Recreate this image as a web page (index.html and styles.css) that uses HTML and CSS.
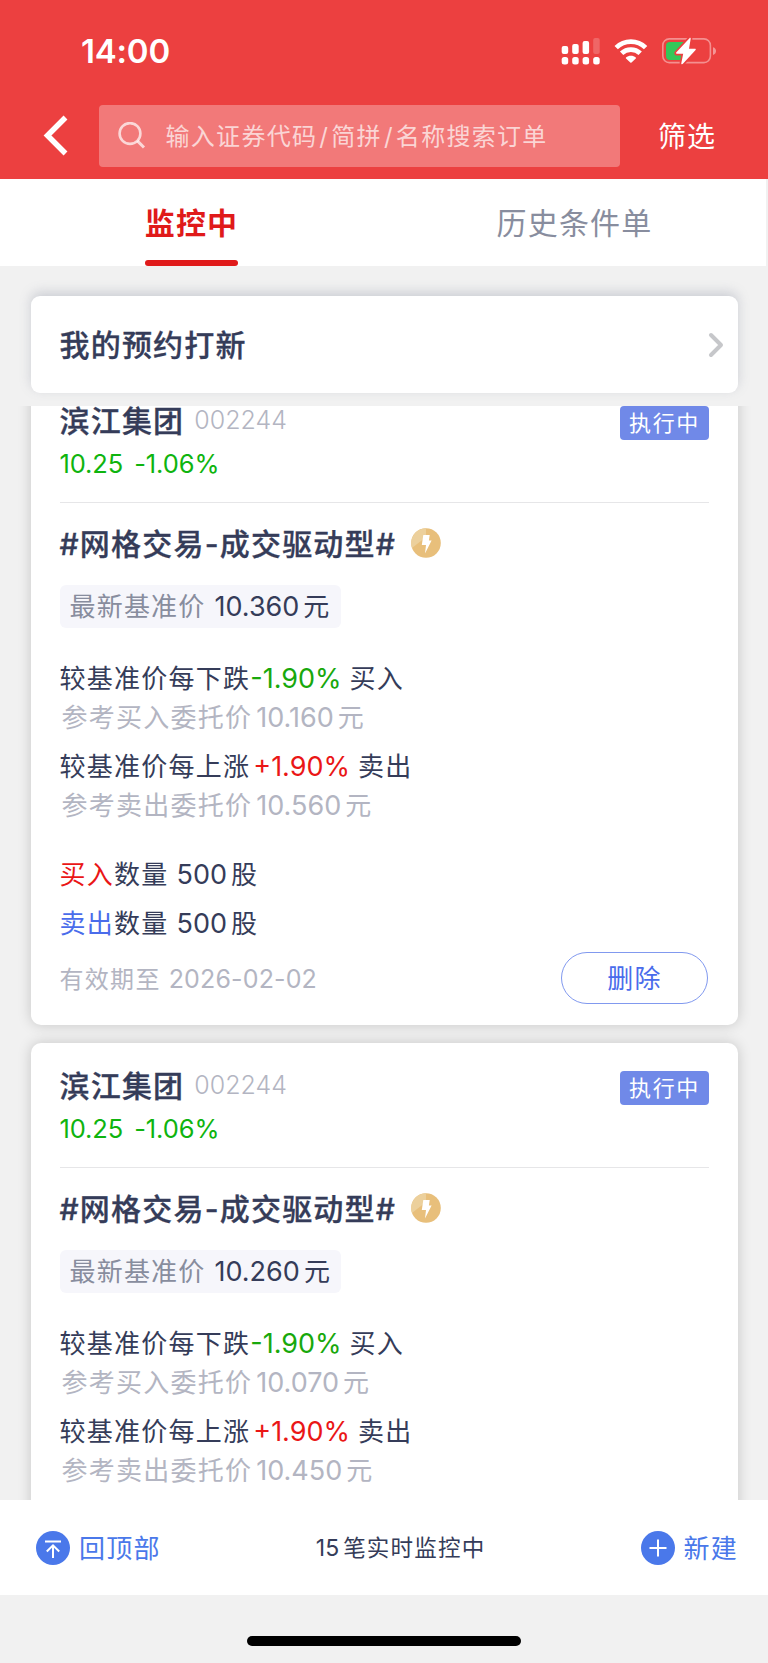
FILE: index.html
```
<!DOCTYPE html>
<html lang="zh-CN">
<head>
    <meta charset="UTF-8">
    <meta name="viewport" content="width=device-width, initial-scale=1.0">
    <title>条件单</title>
    <link rel="stylesheet" href="styles.css">
</head>
<body>
    <div class="page">
        <!-- 顶部 -->
        <header class="header">
            <div class="status-bar">
                <span class="time">14:00</span>
                <svg class="status-icons" width="158" height="32" viewBox="0 0 158 32">
                    <g fill="#fff">
                        <rect x="1.7" y="11" width="6.5" height="8" rx="2"/>
                        <rect x="12.2" y="9" width="6.5" height="10" rx="2"/>
                        <rect x="22.6" y="6" width="6.5" height="13" rx="2"/>
                        <rect x="33.2" y="3" width="6.5" height="16" rx="2" opacity=".2"/>
                        <rect x="1.7" y="22" width="6.5" height="7.5" rx="2.5"/>
                        <rect x="12.2" y="22" width="6.5" height="7.5" rx="2.5"/>
                        <rect x="22.6" y="22" width="6.5" height="7.5" rx="2.5"/>
                        <rect x="33.2" y="22" width="6.5" height="7.5" rx="2.5"/>
                        <path d="M66 22.6c1.400-1.300 3-1.900 4.900-1.900s3.500.600 4.900 1.900c.300.300.300.600 0 .900l-4.300 4c-.400.400-.800.400-1.200 0l-4.300-4c-.300-.300-.300-.600 0-.9z"/>
                    </g>
                    <g fill="none" stroke="#fff" stroke-width="4.800">
                        <path d="M56.200 12.600a21 21 0 0 1 29.400 0"/>
                        <path d="M61.600 18.300a13.500 13.500 0 0 1 18.600 0"/>
                    </g>
                    <rect x="102.800" y="3.900" width="47.600" height="23.700" rx="6.500" fill="none" stroke="#fff" stroke-opacity=".42" stroke-width="1.600"/>
                    <path d="M153 12.200c2 .500 3 2 3 3.900s-1 3.400-3 3.900z" fill="#fff" fill-opacity=".45"/>
                    <path d="M110 7h15.500v18H110a4 4 0 0 1-4-4V11a4 4 0 0 1 4-4z" fill="#34c759"/>
                    <path d="M129.500 3.200L116.200 17.600c-.500.600-.100 1.200.600 1.200h6.400l-1.900 9.400c-.200 1 .9 1.400 1.600.6L135.600 15c.500-.600.100-1.200-.6-1.200h-6l1.700-10c.100-1-.6-1.200-1.200-.6z" fill="#fff" stroke="#ec4040" stroke-width="3.400" paint-order="stroke"/>
                </svg>
            </div>
            <div class="nav-bar">
                <svg class="back" width="26" height="42" viewBox="0 0 26 42">
                    <path d="M23.500 2.500L5.500 20.500l18 18" fill="none" stroke="#fff" stroke-width="5.500"/>
                </svg>
                <div class="search-box">
                    <svg width="28" height="28" viewBox="0 0 28 28" fill="none" stroke="#fff" stroke-opacity=".7" stroke-width="2.600">
                        <circle cx="12" cy="11.500" r="10.400"/>
                        <path d="M19.400 18.900l6.600 6.600" stroke-width="3"/>
                    </svg>
                    <span class="placeholder">输入证券代码<i>/</i>简拼<i>/</i>名称搜索订单</span>
                </div>
                <span class="filter">筛选</span>
            </div>
        </header>

        <nav class="tabs">
            <a class="tab active">监控中</a>
            <a class="tab">历史条件单</a>
        </nav>

        <div class="booking-wrap">
            <div class="booking">
                <span>我的预约打新</span>
                <svg width="16" height="26" viewBox="0 0 16 26">
                    <path d="M3 3l10 10L3 23" fill="none" stroke="#c6c7ca" stroke-width="4" stroke-linecap="round" stroke-linejoin="round"/>
                </svg>
            </div>
        </div>

        <!-- 订单列表，已向上滚动 -->
        <main class="list">
            <section class="card scrolled">
                <div class="card-head">
                    <span class="name">滨江集团</span>
                    <span class="code">002244</span>
                    <span class="badge">执行中</span>
                </div>
                <div class="quote"><span>10.25</span><span>-1.06%</span></div>
                <div class="strategy">
                    <span>#网格交易<i>-</i>成交驱动型#</span>
                    <svg width="30" height="30" viewBox="0 0 30 30">
                        <circle cx="15" cy="15" r="14.800" fill="#e8bf7b"/>
                        <path d="M15 .200A14.800 14.800 0 0 0 1 20L15 9z" fill="#ecd09c"/>
                        <path d="M12.300 7h6.400l-.8 5.400h2.700L14 25.500l1-8.500h-4.200z" fill="#fff"/>
                    </svg>
                </div>
                <div class="base-price">最新基准价<b>10.360</b><em>元</em></div>
                <div class="rule">较基准价每下跌<span class="num down">-1.90%</span>买入</div>
                <div class="ref">参考买入委托价<span class="num">10.160</span>元</div>
                <div class="rule second">较基准价每上涨<span class="num up">+1.90%</span>卖出</div>
                <div class="ref">参考卖出委托价<span class="num">10.560</span>元</div>
                <div class="amount first"><span class="buy">买入</span>数量<span class="num">500</span>股</div>
                <div class="amount"><span class="sell">卖出</span>数量<span class="num">500</span>股</div>
                <div class="card-foot">
                    <span class="expire">有效期至<span class="num">2026-02-02</span></span>
                    <button class="delete">删除</button>
                </div>
            </section>

            <section class="card">
                <div class="card-head">
                    <span class="name">滨江集团</span>
                    <span class="code">002244</span>
                    <span class="badge">执行中</span>
                </div>
                <div class="quote"><span>10.25</span><span>-1.06%</span></div>
                <div class="strategy">
                    <span>#网格交易<i>-</i>成交驱动型#</span>
                    <svg width="30" height="30" viewBox="0 0 30 30">
                        <circle cx="15" cy="15" r="14.800" fill="#e8bf7b"/>
                        <path d="M15 .200A14.800 14.800 0 0 0 1 20L15 9z" fill="#ecd09c"/>
                        <path d="M12.300 7h6.400l-.8 5.400h2.700L14 25.500l1-8.500h-4.200z" fill="#fff"/>
                    </svg>
                </div>
                <div class="base-price">最新基准价<b>10.260</b><em>元</em></div>
                <div class="rule">较基准价每下跌<span class="num down">-1.90%</span>买入</div>
                <div class="ref">参考买入委托价<span class="num">10.070</span>元</div>
                <div class="rule second">较基准价每上涨<span class="num up">+1.90%</span>卖出</div>
                <div class="ref">参考卖出委托价<span class="num">10.450</span>元</div>
            </section>
        </main>

        <footer class="toolbar">
            <a class="action">
                <svg width="34" height="34" viewBox="0 0 34 34">
                    <circle cx="17" cy="17" r="17" fill="#4a78ea"/>
                    <path d="M9 10.500h16M17 27V14.500M10.800 20.500l6.200-6.200 6.200 6.200" fill="none" stroke="#fff" stroke-width="2"/>
                </svg>
                <span>回顶部</span>
            </a>
            <span class="total"><span class="num">15</span>笔实时监控中</span>
            <a class="action">
                <svg width="34" height="34" viewBox="0 0 34 34">
                    <circle cx="17" cy="17" r="17" fill="#4a78ea"/>
                    <path d="M8.500 17h17M17 8.500v17" fill="none" stroke="#fff" stroke-width="2"/>
                </svg>
                <span>新建</span>
            </a>
        </footer>
        <div class="home-area"><div class="home-bar"></div></div>
    </div>
</body>
</html>
```
FILE: styles.css
```
* {
    box-sizing: border-box;
}

body {
    margin: 0;
    background: #f1f1f1;
    color: #353c59;
    font-family: Inter, "Noto Sans CJK SC", sans-serif;
    overflow: hidden;
}

i, em, b {
    font-style: normal;
    font-weight: inherit;
}

.page {
    display: flex;
    flex-direction: column;
    width: 768px;
    height: 1663px;
}

/* 顶部 */
.header {
    height: 179px;
    background: #ec4040;
    color: #fff;
}

.status-bar {
    display: flex;
    justify-content: space-between;
    height: 105px;
    padding: 35px 50px 0 81px;
}

.time {
    font-size: 33px;
    font-weight: 600;
    letter-spacing: -0.2px;
    line-height: 33px;
}

.nav-bar {
    display: flex;
    align-items: center;
    height: 62px;
    padding-left: 42px;
}

.search-box {
    display: flex;
    align-items: center;
    width: 521.5px;
    height: 62px;
    margin-left: 30.5px;
    padding-left: 19px;
    border-radius: 4px;
    background: rgba(255, 255, 255, 0.3);
}

.placeholder {
    margin-left: 20px;
    padding-bottom: 3px;
    color: rgba(255, 255, 255, 0.7);
    font-size: 24px;
    letter-spacing: 1.3px;
}

.placeholder i {
    margin: 0 2px;
}

.filter {
    margin-left: 38px;
    padding-bottom: 3px;
    font-size: 28px;
    letter-spacing: 1px;
}

/* 标签 */
.tabs {
    display: flex;
    width: 766px;
    height: 87px;
    background: #fff;
}

.tab {
    flex: 1;
    display: flex;
    flex-direction: column;
    align-items: center;
    color: #888d9e;
    font-size: 30px;
    letter-spacing: 1.2px;
    line-height: 89px;
}

.tab.active {
    color: #e01a1a;
    font-weight: 700;
}

.tab.active::after {
    content: "";
    width: 93px;
    height: 6px;
    margin-top: -8px;
    border-radius: 3px;
    background: #e01a1a;
}

.booking-wrap {
    height: 140px;
    padding: 30px 30.5px 0;
    overflow: hidden;
}

.booking {
    display: flex;
    align-items: center;
    justify-content: space-between;
    height: 97px;
    padding: 0 14px 0 29px;
    border-radius: 9px;
    background: #fff;
    box-shadow: 0 -4px 12px rgba(110, 118, 140, 0.28);
    font-size: 30px;
    font-weight: 500;
    letter-spacing: 1.2px;
    -webkit-text-stroke: 0.3px currentColor;
}

.booking span {
    padding-bottom: 4px;
}

/* 列表 */
.list {
    height: 1094px;
    padding: 0 30.5px;
    overflow: hidden;
}

.card {
    height: 647px;
    margin-bottom: 18px;
    padding: 24px 28.5px 0 29px;
    border-radius: 10px;
    background: #fff;
    box-shadow: 0 0 14px rgba(0, 0, 0, 0.18);
}

.card.scrolled {
    margin-top: -28px;
}

.card-head {
    display: flex;
    align-items: center;
    height: 37px;
}

.name {
    padding-bottom: 4px;
    font-size: 30px;
    font-weight: 500;
    letter-spacing: 1.2px;
    -webkit-text-stroke: 0.3px currentColor;
}

.code {
    margin-left: 10px;
    padding-bottom: 1px;
    color: #b3b5c2;
    font-size: 25px;
    font-weight: 350;
}

.badge {
    width: 89px;
    height: 34px;
    margin: 5px 0 0 auto;
    border-radius: 4px;
    background: #7089e8;
    color: #fff;
    font-size: 22px;
    letter-spacing: 1.6px;
    line-height: 34px;
    text-align: center;
}

.quote {
    display: flex;
    gap: 11px;
    height: 64px;
    padding-top: 5px;
    border-bottom: 1px solid #e6e6e8;
    color: #0fb40f;
    font-size: 25.5px;
    letter-spacing: -0.1px;
    line-height: 40px;
}

.strategy {
    display: flex;
    align-items: center;
    gap: 15px;
    height: 50px;
    margin-top: 15px;
    font-size: 30px;
    font-weight: 500;
    letter-spacing: 1.2px;
    -webkit-text-stroke: 0.3px currentColor;
}

.strategy span {
    padding-bottom: 3px;
}

.base-price {
    width: max-content;
    height: 43px;
    margin: 17px 0 30px;
    padding: 0 10px;
    border-radius: 6px;
    background: #f6f6fb;
    color: #888d9e;
    font-size: 26px;
    letter-spacing: 1.2px;
    line-height: 44px;
}

.base-price b {
    margin: 0 4px 0 9px;
    color: #353c59;
    font-size: 27px;
    letter-spacing: 0;
}

.base-price em {
    color: #353c59;
}

.rule,
.ref,
.amount {
    height: 40px;
    font-size: 26px;
    letter-spacing: 1.25px;
    line-height: 41px;
    white-space: nowrap;
}

.rule.second {
    margin-top: 8px;
}

.num {
    font-size: 27px;
    letter-spacing: 0;
}

.rule .num {
    margin-right: 8px;
}

.down {
    color: #18a80c;
}

.rule .up {
    margin-left: 3px;
    color: #ea1616;
}

.ref {
    padding-left: 2px;
    color: #b3b5c2;
    line-height: 40px;
}

.ref .num {
    margin: 0 4px;
}

.amount {
    margin-top: 9px;
    line-height: 42px;
}

.amount.first {
    margin-top: 28px;
}

.amount .num {
    margin: 0 4px 0 8px;
}

.buy {
    color: #ea1616;
}

.sell {
    color: #4a6ceb;
}

.card-foot {
    display: flex;
    align-items: center;
    justify-content: space-between;
    height: 53px;
    margin-top: 8px;
}

.expire {
    color: #b3b5c2;
    font-size: 24px;
    letter-spacing: 1.3px;
}

.expire .num {
    margin-left: 8px;
    font-size: 25px;
    letter-spacing: 0.15px;
}

.delete {
    width: 147px;
    height: 52px;
    margin-right: 1px;
    padding: 0 0 2px;
    border: 1.5px solid #8199ef;
    border-radius: 27px;
    background: #fff;
    color: #4a6ceb;
    font-family: inherit;
    font-size: 26px;
    letter-spacing: 1.2px;
}

/* 底部 */
.toolbar {
    display: flex;
    align-items: center;
    justify-content: space-between;
    height: 95px;
    padding: 0 30px 0 36px;
    background: #fff;
}

.action {
    display: flex;
    align-items: center;
    gap: 9px;
    color: #4a78ea;
    font-size: 26px;
    letter-spacing: 1.2px;
}

.action span {
    padding-bottom: 2px;
}

.total {
    padding-bottom: 3px;
    font-size: 22.5px;
    letter-spacing: 1.2px;
}

.total .num {
    margin-right: 4px;
    font-size: 23px;
}

.home-area {
    height: 68px;
    padding-top: 41px;
}

.home-bar {
    width: 274px;
    height: 10px;
    margin: 0 auto;
    border-radius: 5px;
    background: #000;
}
```
